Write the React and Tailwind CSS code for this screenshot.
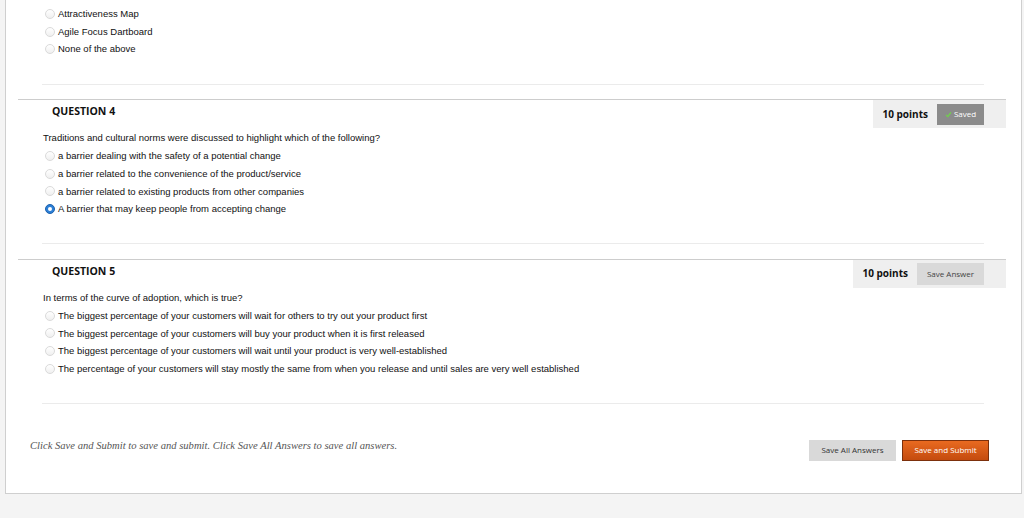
import React from "react";

const Radio = ({ checked }) =>
  checked ? (
    <span className="w-[10px] h-[10px] rounded-full bg-[#2c7fd6] border border-[#1e62ad] flex items-center justify-center shrink-0">
      <span className="w-[4px] h-[4px] rounded-full bg-white" />
    </span>
  ) : (
    <span className="w-[10px] h-[10px] rounded-full border border-[#dadada] bg-gradient-to-b from-white to-[#f0f0f0] shrink-0" />
  );

const Option = ({ text, checked }) => (
  <div className="h-[17.7px] flex items-center pl-[27px] gap-[3px]">
    <Radio checked={checked} />
    <span className="text-[9.5px] leading-none text-[#111]" style={{ fontFamily: '"Liberation Sans", Arial, sans-serif' }}>
      {text}
    </span>
  </div>
);

const Separator = ({ className }) => <div className={"ml-[24px] mr-[22px] h-px bg-[#ebebeb] " + className} />;

const Question = ({ num, text, options, saved }) => (
  <div className="border-t border-[#cdcdcd]">
    <div className="flex items-start justify-between">
      <div className="h-[24px] flex items-center pl-[34px] text-[10.5px] font-bold text-[#111]" style={{ fontFamily: '"Open Sans", sans-serif' }}>
        QUESTION {num}
      </div>
      <div className="h-[28px] bg-[#efefef] flex items-center pl-[10px] pr-[22px] gap-[9px]" style={{ fontFamily: '"Open Sans", sans-serif' }}>
        <span className="text-[10px] font-bold text-[#111]">10 points</span>
        {saved ? (
          <span className="w-[47px] h-[21px] bg-[#8b8b8b] flex items-center justify-center gap-[2px] text-[8px] text-white">
            <svg width="7" height="7" viewBox="0 0 10 10">
              <path d="M1.5 5.5 L4 8 L8.5 2" fill="none" stroke="#6fd34a" strokeWidth="1.8" />
            </svg>
            Saved
          </span>
        ) : (
          <span className="w-[67px] h-[22px] bg-[#d9d9d9] flex items-center justify-center text-[8px] text-[#444]">Save Answer</span>
        )}
      </div>
    </div>
    <div className="h-[18px] leading-[18px] pt-[1px] pl-[25px] text-[9.5px] text-[#111]" style={{ fontFamily: '"Liberation Sans", Arial, sans-serif' }}>
      {text}
    </div>
    <div className="mt-[1px]">
      {options.map((o, i) => (
        <Option key={i} text={o.t} checked={o.c} />
      ))}
    </div>
    <Separator className="mt-[25px]" />
  </div>
);

export default function App() {
  return (
    <div className="w-[1024px] h-[518px] bg-[#f4f4f4] overflow-hidden">
      <div className="ml-[5px] w-[1017px] h-[494px] bg-white border-x border-b border-[#cfcfcf]">
        <div className="ml-[12px] w-[988px]">
          <div className="pt-[5px]">
            <Option text="Attractiveness Map" />
            <Option text="Agile Focus Dartboard" />
            <Option text="None of the above" />
          </div>
          <Separator className="mt-[26px]" />
          <div className="mt-[14px]">
            <Question
              num={4}
              saved
              text="Traditions and cultural norms were discussed to highlight which of the following?"
              options={[
                { t: "a barrier dealing with the safety of a potential change" },
                { t: "a barrier related to the convenience of the product/service" },
                { t: "a barrier related to existing products from other companies" },
                { t: "A barrier that may keep people from accepting change", c: true },
              ]}
            />
          </div>
          <div className="mt-[15px]">
            <Question
              num={5}
              text="In terms of the curve of adoption, which is true?"
              options={[
                { t: "The biggest percentage of your customers will wait for others to try out your product first" },
                { t: "The biggest percentage of your customers will buy your product when it is first released" },
                { t: "The biggest percentage of your customers will wait until your product is very well-established" },
                { t: "The percentage of your customers will stay mostly the same from when you release and until sales are very well established" },
              ]}
            />
          </div>
        </div>
        <div className="flex items-start justify-between pl-[24px] pr-[32px] pt-[35px]">
          <span className="text-[10.6px] leading-[14px] italic text-[#555]" style={{ fontFamily: '"Liberation Serif", Georgia, serif' }}>
            Click Save and Submit to save and submit. Click Save All Answers to save all answers.
          </span>
          <div className="flex gap-[6px] mt-[1px]" style={{ fontFamily: '"Open Sans", sans-serif' }}>
            <button className="w-[87px] h-[21px] bg-[#d9d9d9] text-[8px] text-[#333]">Save All Answers</button>
            <button className="w-[87px] h-[21px] bg-gradient-to-b from-[#e96a20] to-[#c44b0e] border border-[#7c300c] text-[8px] text-white">
              Save and Submit
            </button>
          </div>
        </div>
      </div>
    </div>
  );
}
